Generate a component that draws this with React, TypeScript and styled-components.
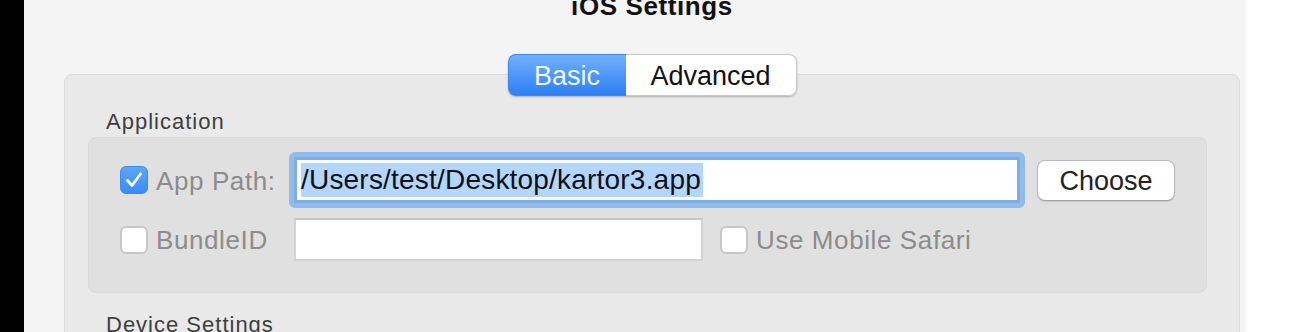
import React from "react";
import styled, { createGlobalStyle } from "styled-components";

const Global = createGlobalStyle`
  html, body { margin: 0; padding: 0; background: #ffffff; }
  body { font-family: "Liberation Sans", Arial, sans-serif; }
`;

const Screen = styled.div`
  display: flex;
  width: 1306px;
  height: 332px;
  overflow: hidden;
`;

const BlackStrip = styled.div`
  width: 24px;
  flex: none;
  background: #000;
`;

const Window = styled.div`
  width: 1222px;
  flex: none;
  background: #f4f4f4;
  overflow: hidden;
`;

const Blank = styled.div`
  flex: 1;
  background: #fff;
`;

const Column = styled.div`
  margin-left: 40px;
  width: 1176px;
  display: flex;
  flex-direction: column;
`;

const Title = styled.div`
  margin-top: -9px;
  height: 30px;
  line-height: 30px;
  text-align: center;
  font-size: 26px;
  font-weight: bold;
  color: #111;
  letter-spacing: 0.6px;
`;

const Tabs = styled.div`
  position: relative;
  z-index: 1;
  align-self: center;
  display: flex;
  margin-top: 33px;
  margin-bottom: -22px;
  height: 42px;
  border-radius: 8px;
  box-shadow: 0 1px 2px rgba(0, 0, 0, 0.25);
`;

const Tab = styled.div<{ $active?: boolean; $w: number }>`
  width: ${(p) => p.$w}px;
  box-sizing: border-box;
  display: flex;
  align-items: center;
  justify-content: center;
  font-size: 27px;
  padding-top: 2px;
  color: ${(p) => (p.$active ? "#f2f6ff" : "#111")};
  background: ${(p) =>
    p.$active ? "linear-gradient(#72b0fa, #2d7ef6)" : "#ffffff"};
  border: 1px solid ${(p) => (p.$active ? "#3d88f0" : "#c9c9c9")};
  border-radius: ${(p) => (p.$active ? "8px 0 0 8px" : "0 8px 8px 0")};
  ${(p) => (p.$active ? "border-right: none;" : "border-left: none;")}
`;

const GroupBox = styled.div`
  background: #e9e9e9;
  border: 1px solid #dcdcdc;
  border-radius: 8px;
  padding: 34px 0 0 23px;
  height: 400px;
  box-sizing: border-box;
`;

const SectionLabel = styled.div<{ $gap: number }>`
  margin-left: 18px;
  margin-top: ${(p) => p.$gap}px;
  font-size: 22px;
  line-height: 26px;
  letter-spacing: 1px;
  color: #3e3e3e;
`;

const InnerBox = styled.div`
  margin-top: 2px;
  width: 1119px;
  height: 156px;
  box-sizing: border-box;
  background: #e0e0e0;
  border: 1px solid #dadada;
  border-radius: 8px;
  padding: 14px 31px 0 31px;
  display: flex;
  flex-direction: column;
  gap: 10px;
`;

const Row = styled.div<{ $h: number }>`
  display: flex;
  align-items: center;
  height: ${(p) => p.$h}px;
`;

const CheckLabel = styled.label<{ $w?: number }>`
  display: flex;
  align-items: center;
  gap: 8px;
  width: ${(p) => (p.$w ? `${p.$w}px` : "auto")};
  flex: none;
  font-size: 26px;
  letter-spacing: 0.6px;
  color: #8c8c8c;
  padding-top: 2px;
`;

const Box = styled.span<{ $checked?: boolean }>`
  width: 28px;
  height: 28px;
  margin-top: -2px;
  box-sizing: border-box;
  border-radius: 6px;
  display: flex;
  align-items: center;
  justify-content: center;
  flex: none;
  background: ${(p) =>
    p.$checked ? "linear-gradient(#5ea6f7, #3b8bf1)" : "#ffffff"};
  border: ${(p) => (p.$checked ? "1px solid #3f8ae8" : "2px solid #c6c6c6")};
`;

const FocusRing = styled.div`
  margin-left: -5px;
  width: 736px;
  height: 56px;
  box-sizing: border-box;
  padding: 5px;
  border-radius: 6px;
  background: #92bcec;
  flex: none;
`;

const FocusedField = styled.div`
  height: 100%;
  box-sizing: border-box;
  background: #fff;
  border: 3px solid #7eaee6;
  display: flex;
  align-items: center;
  padding-left: 4px;
`;

const Selected = styled.span`
  background: #b4d5fe;
  color: #111;
  font-size: 28px;
  line-height: 34px;
  letter-spacing: 0.2px;
  padding-right: 2px;
`;

const Field = styled.div<{ $w: number }>`
  width: ${(p) => p.$w}px;
  height: 43px;
  box-sizing: border-box;
  background: #fff;
  border: 2px solid #d2d2d2;
  border-top-color: #c6c6c6;
  flex: none;
`;

const Button = styled.button`
  margin-left: 12px;
  width: 138px;
  height: 41px;
  box-sizing: border-box;
  background: #fff;
  border: 1px solid #b9b9b9;
  border-bottom-color: #a4a4a4;
  border-radius: 8px;
  box-shadow: 0 1px 1px rgba(0, 0, 0, 0.12);
  font-family: "Liberation Sans", Arial, sans-serif;
  font-size: 27px;
  color: #222;
  padding: 2px 0 0 0;
`;

const Spacer = styled.span<{ $w: number }>`
  width: ${(p) => p.$w}px;
  flex: none;
`;

const Check = () => (
  <svg width="22" height="22" viewBox="0 0 22 22">
    <polyline
      points="4.5,11.5 9,16.5 17.5,5"
      fill="none"
      stroke="#fff"
      strokeWidth="2.8"
      strokeLinecap="round"
      strokeLinejoin="round"
    />
  </svg>
);

export default function App() {
  return (
    <>
      <Global />
      <Screen>
        <BlackStrip />
        <Window>
          <Column>
            <Title>iOS Settings</Title>
            <Tabs>
              <Tab $active $w={118}>Basic</Tab>
              <Tab $w={171}>Advanced</Tab>
            </Tabs>
            <GroupBox>
              <SectionLabel $gap={0}>Application</SectionLabel>
              <InnerBox>
                <Row $h={56}>
                  <CheckLabel $w={174}>
                    <Box $checked>
                      <Check />
                    </Box>
                    App Path:
                  </CheckLabel>
                  <FocusRing>
                    <FocusedField>
                      <Selected>/Users/test/Desktop/kartor3.app</Selected>
                    </FocusedField>
                  </FocusRing>
                  <Button>Choose</Button>
                </Row>
                <Row $h={43}>
                  <CheckLabel $w={174}>
                    <Box />
                    BundleID
                  </CheckLabel>
                  <Field $w={409} />
                  <Spacer $w={17} />
                  <CheckLabel>
                    <Box />
                    Use Mobile Safari
                  </CheckLabel>
                </Row>
              </InnerBox>
              <SectionLabel $gap={19}>Device Settings</SectionLabel>
            </GroupBox>
          </Column>
        </Window>
        <Blank />
      </Screen>
    </>
  );
}
